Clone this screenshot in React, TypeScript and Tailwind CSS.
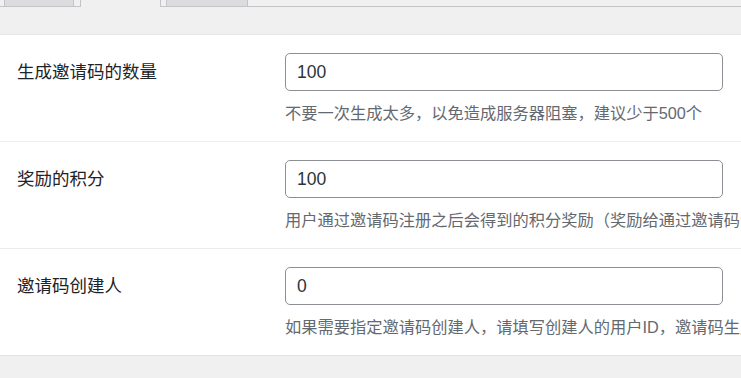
import React from 'react';

const font = { fontFamily: '"Liberation Sans", "Noto Sans CJK SC", sans-serif' };

const rows = [
  {
    label: '生成邀请码的数量',
    value: '100',
    desc: '不要一次生成太多，以免造成服务器阻塞，建议少于500个',
  },
  {
    label: '奖励的积分',
    value: '100',
    desc: '用户通过邀请码注册之后会得到的积分奖励（奖励给通过邀请码注册的用户）',
  },
  {
    label: '邀请码创建人',
    value: '0',
    desc: '如果需要指定邀请码创建人，请填写创建人的用户ID，邀请码生成后将归属于该用户',
  },
];

export default function App() {
  return (
    <div className="w-[741px] h-[378px] overflow-hidden bg-[#f0f0f1]" style={font}>
      {/* tab strip, top cut off */}
      <div className="flex h-[7px]">
        <div className="w-[4px] border-b border-[#c3c4c7]" />
        <div className="w-[70px] bg-[#dcdcde] border-x border-b border-[#c3c4c7]" />
        <div className="w-[6px] border-b border-[#c3c4c7]" />
        <div className="w-[81px] bg-[#f0f0f1] border-x border-[#c3c4c7]" />
        <div className="w-[5px] border-b border-[#c3c4c7]" />
        <div className="w-[82px] bg-[#dcdcde] border-x border-b border-[#c3c4c7]" />
        <div className="flex-1 border-b border-[#c3c4c7]" />
      </div>

      <div className="mt-[27px] bg-white border-t border-[#e6e6e7] border-b border-b-[#e2e2e3]">
        {rows.map((row, i) => (
          <div
            key={row.label}
            className={`flex ${i < rows.length - 1 ? 'border-b border-[#ececed]' : ''}`}
          >
            <div className="w-[285px] shrink-0 pl-[17px] pt-[25px] text-[17.5px] leading-[24px] text-[#1d2327]">
              {row.label}
            </div>
            <div className="pt-[18px] pb-[17px]">
              <div className="w-[438px] h-[38px] rounded-[5px] border border-[#8c8f94] bg-white flex items-center pl-[11px] text-[17.5px] text-[#2c3338]">
                {row.value}
              </div>
              <p className="mt-[11px] leading-[22px] text-[16.25px] text-[#646970] whitespace-nowrap">
                {row.desc}
              </p>
            </div>
          </div>
        ))}
      </div>
    </div>
  );
}
